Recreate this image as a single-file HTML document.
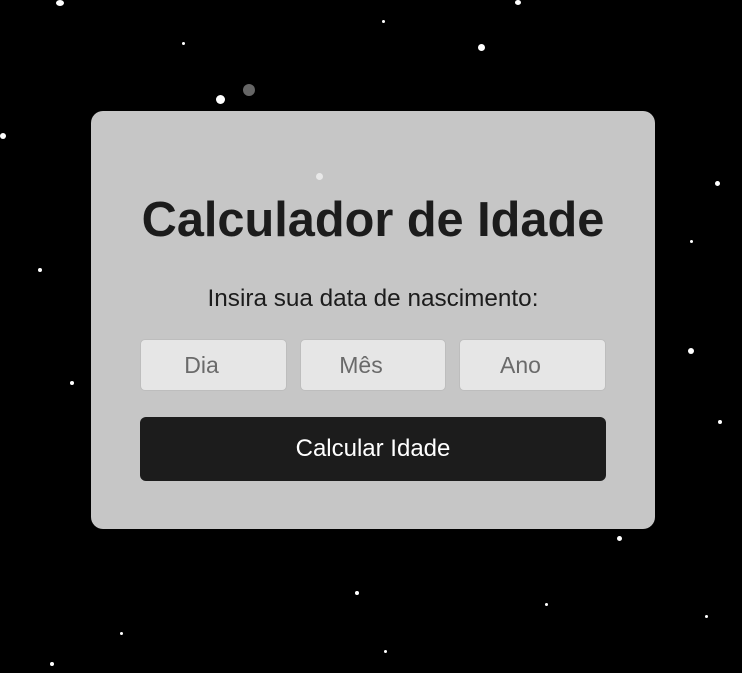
<!DOCTYPE html>
<html><head><meta charset="utf-8"><style>
html,body{margin:0;padding:0;width:742px;height:673px;background:#000;overflow:hidden;font-family:"Liberation Sans",Arial,sans-serif;}
.s{position:absolute;background:#fff;border-radius:50%;}
.card{position:absolute;left:91px;top:111px;width:564px;height:418px;background:#c6c6c6;border-radius:12px;}
h1{position:absolute;left:2px;width:742px;top:192px;margin:0;text-align:center;font-size:48.7px;font-weight:bold;color:#1c1c1c;line-height:56px;}
.sub{position:absolute;left:2px;width:742px;top:285px;text-align:center;font-size:24.3px;color:#1c1c1c;}
.in{position:absolute;top:339px;height:50px;background:#e6e6e6;border:1px solid #bdbdbd;border-radius:5px;font-size:23px;color:#6a6a6a;line-height:50px;text-align:center;}
.btn{position:absolute;left:140px;top:417px;width:466px;height:64px;background:#1c1c1c;border-radius:6px;color:#fff;font-size:24px;line-height:63px;text-align:center;}
</style></head><body>
<div class="s" style="left:56px;top:0;width:8px;height:6px"></div>
<div class="s" style="left:216px;top:95px;width:9px;height:9px"></div>
<div class="s" style="left:243px;top:84px;width:12px;height:12px;opacity:.4"></div>
<div class="s" style="left:478px;top:44px;width:7px;height:7px"></div>
<div class="s" style="left:515px;top:0;width:6px;height:5px"></div>
<div class="s" style="left:0;top:133px;width:6px;height:6px"></div>
<div class="s" style="left:688px;top:348px;width:6px;height:6px"></div>
<div class="s" style="left:715px;top:181px;width:5px;height:5px"></div>
<div class="s" style="left:617px;top:536px;width:5px;height:5px"></div>
<div class="s" style="left:70px;top:381px;width:4px;height:4px"></div>
<div class="s" style="left:38px;top:268px;width:4px;height:4px"></div>
<div class="s" style="left:355px;top:591px;width:4px;height:4px"></div>
<div class="s" style="left:384px;top:650px;width:3px;height:3px"></div>
<div class="s" style="left:50px;top:662px;width:4px;height:4px"></div>
<div class="s" style="left:718px;top:420px;width:4px;height:4px"></div>
<div class="s" style="left:690px;top:240px;width:3px;height:3px"></div>
<div class="s" style="left:182px;top:42px;width:3px;height:3px"></div>
<div class="s" style="left:382px;top:20px;width:3px;height:3px"></div>
<div class="s" style="left:545px;top:603px;width:3px;height:3px"></div>
<div class="s" style="left:705px;top:615px;width:3px;height:3px"></div>
<div class="s" style="left:120px;top:632px;width:3px;height:3px"></div>
<div class="card"></div>
<div class="s" style="left:316px;top:173px;width:7px;height:7px;opacity:.6"></div>
<h1>Calculador de Idade</h1>
<div class="sub">Insira sua data de nascimento:</div>
<div class="in" style="left:140px;width:145px;"><span style="margin-left:-24px">Dia</span></div>
<div class="in" style="left:300px;width:144px;"><span style="margin-left:-24px">Mês</span></div>
<div class="in" style="left:459px;width:145px;"><span style="margin-left:-24px">Ano</span></div>
<div class="btn">Calcular Idade</div>
</body></html>
